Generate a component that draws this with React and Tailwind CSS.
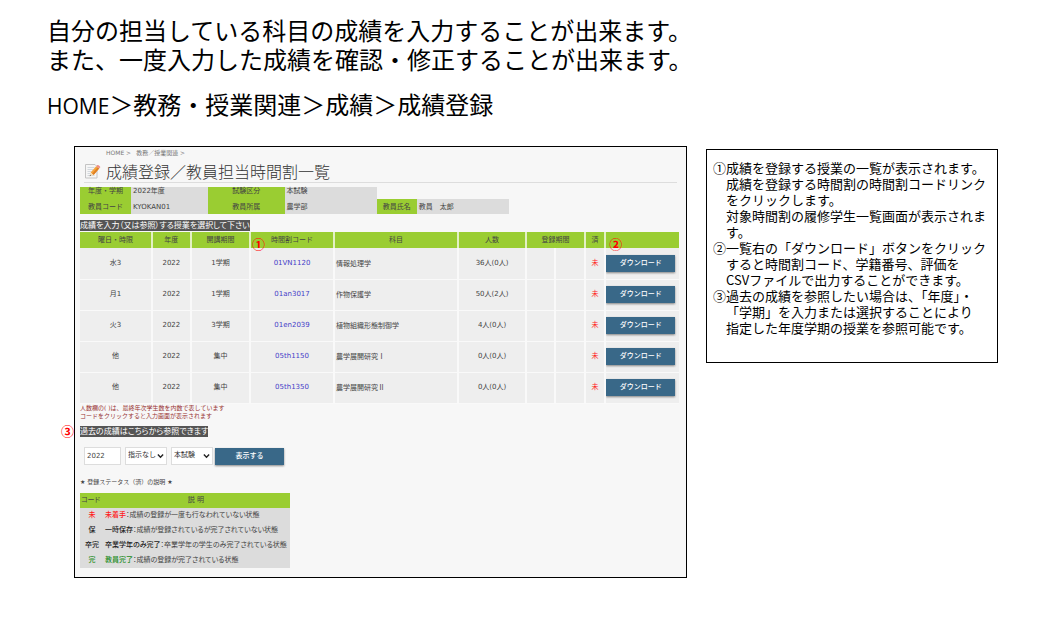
import React, { useState } from "react";

const courses = [
  { day: "水3", year: "2022", term: "1学期", code: "01VN1120", subject: "情報処理学", count: "36人(0人)" },
  { day: "月1", year: "2022", term: "1学期", code: "01an3017", subject: "作物保護学", count: "50人(2人)" },
  { day: "火3", year: "2022", term: "3学期", code: "01en2039", subject: "植物組織形態制御学", count: "4人(0人)" },
  { day: "他", year: "2022", term: "集中", code: "05th1150", subject: "農学展開研究Ⅰ", count: "0人(0人)" },
  { day: "他", year: "2022", term: "集中", code: "05th1350", subject: "農学展開研究Ⅱ", count: "0人(0人)" },
];

const statuses = [
  { mark: "未", name: "未着手", text: "成績の登録が一度も行なわれていない状態", color: "text-[#ff2020]" },
  { mark: "保", name: "一時保存", text: "成績が登録されているが完了されていない状態", color: "text-[#222]" },
  { mark: "卒完", name: "卒業学年のみ完了", text: "卒業学年の学生のみ完了されている状態", color: "text-[#222]" },
  { mark: "完", name: "教員完了", text: "成績の登録が完了されている状態", color: "text-[#228b22]" },
];

const guide = [
  {
    mark: "①",
    lines: [
      "成績を登録する授業の一覧が表示されます。",
      "成績を登録する時間割の時間割コードリンク",
      "をクリックします。",
      "対象時間割の履修学生一覧画面が表示されま",
      "す。",
    ],
  },
  {
    mark: "②",
    lines: [
      "一覧右の「ダウンロード」ボタンをクリック",
      "すると時間割コード、学籍番号、評価を",
      "CSVファイルで出力することができます。",
    ],
  },
  {
    mark: "③",
    lines: [
      "過去の成績を参照したい場合は、「年度」・",
      "「学期」を入力または選択することにより",
      "指定した年度学期の授業を参照可能です。",
    ],
  },
];

const buttonClassName =
  "h-[17px] w-[69px] bg-[#396888] text-white text-[7px] leading-[17px] font-medium shadow-[0_1px_2px_rgba(0,0,0,0.45)]";
const infoHeadClassName = "bg-[#9acd32] font-normal text-center";
const infoCellClassName = "bg-[#dcdcdc] pl-[2px]";
const bandClassName =
  "w-fit h-[11px] bg-[#555] text-white text-[8px] leading-[11px] whitespace-nowrap [font-feature-settings:'palt']";
const markClassName =
  "absolute font-bold text-[13px] leading-[13px] text-[#f00] font-['Noto_Sans_CJK_JP',sans-serif]";
const selectClassName =
  "block w-full h-[18px] appearance-none bg-white border border-[#ddd] pl-[2px] text-[7px] text-[#333]";

const NoteIcon = () => (
  <svg viewBox="0 0 18 18" className="w-[18px] h-[18px]" aria-hidden="true">
    <path d="M1.5 2.5h9.5l2 2V16H1.5z" fill="#f6f6f6" stroke="#c4c4c4" />
    <path d="M3.5 5.5h7M3.5 7.5h6M3.5 9.5h4M3.5 11.5h3M3.5 13.5h7" stroke="#d3d8dd" />
    <path d="M12.2 4.2l3 2.4-5.6 6.4-3-2.4z" fill="#f5a33a" />
    <path d="M13.7 5.4l1.5 1.2-5.6 6.4-1.5-1.2z" fill="#df7f22" />
    <path d="M12.2 4.2l1.1-1.2c.9-.6 3.3 1.300 3 2.300l-1.100 1.300z" fill="#ee8f86" />
    <path d="M6.600 10.600l3 2.400-3.900 1.300z" fill="#f3dcb4" />
    <path d="M6.100 12.800l.9.800-1.300.700z" fill="#444" />
  </svg>
);

const Arrow = () => (
  <svg viewBox="0 0 8 6" className="absolute right-[3px] top-[6px] w-[7px] h-[6px] pointer-events-none" aria-hidden="true">
    <path d="M1 1.3l3 3 3-3" fill="none" stroke="#222" strokeWidth="1.6" />
  </svg>
);

const CourseTable = () => (
  <table className="w-full table-fixed mt-px text-center text-[7px] leading-[9px]">
    <colgroup>
      <col className="w-[12%]" />
      <col className="w-[6.5%]" />
      <col className="w-[9.9%]" />
      <col className="w-[14%]" />
      <col className="w-[20.7%]" />
      <col className="w-[11.4%]" />
      <col className="w-[4.8%]" />
      <col className="w-[5%]" />
      <col className="w-[3.4%]" />
      <col className="w-[12.3%]" />
    </colgroup>
    <thead>
      <tr className="h-4 bg-[#9acd32] [&>th]:font-normal [&>th+th]:border-l-2 [&>th+th]:border-[#e3f0c4]">
        <th>曜日・時限</th>
        <th>年度</th>
        <th>開講期間</th>
        <th className="relative">
          時間割コード
          <span className={`${markClassName} left-px top-[5px]`}>①</span>
        </th>
        <th>科目</th>
        <th>人数</th>
        <th colSpan={2}>登録期間</th>
        <th>済</th>
        <th className="relative">
          <span className={`${markClassName} left-[3px] top-[5px]`}>②</span>
        </th>
      </tr>
    </thead>
    <tbody>
      {courses.map((course) => (
        <tr
          key={course.code}
          className="h-[31px] bg-[#eee] border-b border-[#f9f9f9] [&>td+td]:border-l-2 [&>td+td]:border-[#f9f9f9]"
        >
          <td>{course.day}</td>
          <td>{course.year}</td>
          <td>{course.term}</td>
          <td>
            <a href="#" className="text-[#4540c8]">{course.code}</a>
          </td>
          <td className="text-left pl-px font-['Noto_Sans_CJK_JP',sans-serif]">{course.subject}</td>
          <td>{course.count}</td>
          <td></td>
          <td></td>
          <td className="text-[#ff2020]">未</td>
          <td className="text-left">
            <button type="button" className={`${buttonClassName} block`}>ダウンロード</button>
          </td>
        </tr>
      ))}
    </tbody>
  </table>
);

const SearchForm = () => {
  const [year, setYear] = useState("2022");

  return (
    <form onSubmit={(e) => e.preventDefault()} className="flex mt-[10px] ml-1 gap-1">
      <input
        type="text"
        aria-label="年度"
        value={year}
        onChange={(e) => setYear(e.target.value)}
        className="w-[37px] h-[18px] bg-white border border-[#ddd] pl-[2px] text-[7px]"
      />
      <div className="relative w-[42px]">
        <select aria-label="学期" className={selectClassName}>
          <option>指示なし</option>
          <option>1学期</option>
          <option>3学期</option>
        </select>
        <Arrow />
      </div>
      <div className="flex gap-[2px]">
        <div className="relative w-[42px]">
          <select aria-label="試験区分" className={selectClassName}>
            <option>本試験</option>
          </select>
          <Arrow />
        </div>
        <button type="submit" className={`${buttonClassName} mt-px`}>表示する</button>
      </div>
    </form>
  );
};

const StatusTable = () => (
  <table className="mt-[7px] w-[35%] table-fixed bg-[#dcdcdc] text-[7px] leading-[9px] whitespace-nowrap [font-feature-settings:'palt']">
    <thead>
      <tr className="h-[15px] bg-[#9acd32]">
        <th className="w-[24px] pl-px text-left font-normal">コード</th>
        <th className="pr-[2px] font-normal">説 明</th>
      </tr>
    </thead>
    <tbody>
      {statuses.map((status) => (
        <tr key={status.mark} className="h-[15px]">
          <td className={`text-center font-medium ${status.color}`}>{status.mark}</td>
          <td className="pl-px">
            <span className={`font-medium ${status.color}`}>{status.name}</span>：{status.text}
          </td>
        </tr>
      ))}
    </tbody>
  </table>
);

const GradePanel = () => (
  <section className="border border-black bg-[#f7f7f7] pl-[5px] pr-[7px] pb-[9px] text-[#444] font-['DejaVu_Sans','Noto_Sans_CJK_JP',sans-serif]">
    <nav className="flex gap-[5px] pl-[26px] text-[6px] leading-[12px] text-[#777]">
      <a href="#">HOME &gt;</a>
      <a href="#">教務／授業関連 &gt;</a>
    </nav>
    <div className="flex items-center gap-1 h-6 ml-1 mr-[2px] border-b border-[#ddd]">
      <NoteIcon />
      <h1 className="text-[16px] leading-[22px] font-light text-[#333] whitespace-nowrap font-['Noto_Sans_CJK_JP',sans-serif]">
        成績登録／教員担当時間割一覧
      </h1>
    </div>

    <table className="mt-1 w-[71.6%] table-fixed text-[7px] leading-[8px] whitespace-nowrap">
      <colgroup>
        <col className="w-[11.9%]" />
        <col className="w-[17.9%]" />
        <col className="w-[17.9%]" />
        <col className="w-[21.5%]" />
        <col className="w-[9.3%]" />
        <col className="w-[21.5%]" />
      </colgroup>
      <tbody>
        <tr className="h-3 align-top">
          <th className={infoHeadClassName}>年度・学期</th>
          <td className={infoCellClassName}>2022年度</td>
          <th className={infoHeadClassName}>試験区分</th>
          <td className={infoCellClassName}>本試験</td>
          <td colSpan={2}></td>
        </tr>
        <tr className="h-[15px]">
          <th className={infoHeadClassName}>教員コード</th>
          <td className={infoCellClassName}>KYOKAN01</td>
          <th className={infoHeadClassName}>教員所属</th>
          <td className={infoCellClassName}>農学部</td>
          <th className={infoHeadClassName}>教員氏名</th>
          <td className={infoCellClassName}>教員　太郎</td>
        </tr>
      </tbody>
    </table>

    <p className={`${bandClassName} mt-[6px]`}>成績を入力（又は参照）する授業を選択して下さい</p>
    <CourseTable />
    <p className="text-[6px] leading-[8px] text-[#993333]">
      人数欄の( )は、最終年次学生数を内数で表しています
      <br />
      コードをクリックすると入力画面が表示されます
    </p>
    <div className="relative mt-[6px]">
      <span className={`${markClassName} -left-[19px] -top-[2px]`}>③</span>
      <p className={bandClassName}>過去の成績はこちらから参照できます</p>
    </div>
    <SearchForm />
    <p className="mt-[13px] text-[6px] leading-[8px]">★ 登録ステータス（済）の説明 ★</p>
    <StatusTable />
  </section>
);

const App = () => {
  return (
    <main lang="ja" className="min-h-screen bg-white text-black font-['Noto_Sans_CJK_JP',sans-serif]">
      <header className="pt-[15px] pl-[47px] text-2xl leading-[29px]">
        <p>自分の担当している科目の成績を入力することが出来ます。</p>
        <p>また、一度入力した成績を確認・修正することが出来ます。</p>
        <p className="mt-4">
          <span className="text-[21px] leading-none font-['Open_Sans',sans-serif]">HOME</span>＞教務・授業関連＞成績＞成績登録
        </p>
      </header>

      <div className="grid grid-cols-[minmax(0,613fr)_minmax(0,292fr)] items-start gap-[19px] mt-7 pl-[74px] pr-[42px]">
        <GradePanel />
        <aside className="mt-[3px] border border-black pt-[10px] pl-[6px] pb-[26px] text-[13px] leading-4 whitespace-nowrap">
          <ol>
            {guide.map((item) => (
              <li key={item.mark} className="flex">
                <span className="w-[13px]">{item.mark}</span>
                <div>
                  {item.lines.map((line) => (
                    <p key={line}>{line}</p>
                  ))}
                </div>
              </li>
            ))}
          </ol>
        </aside>
      </div>
    </main>
  );
};

export default App;
